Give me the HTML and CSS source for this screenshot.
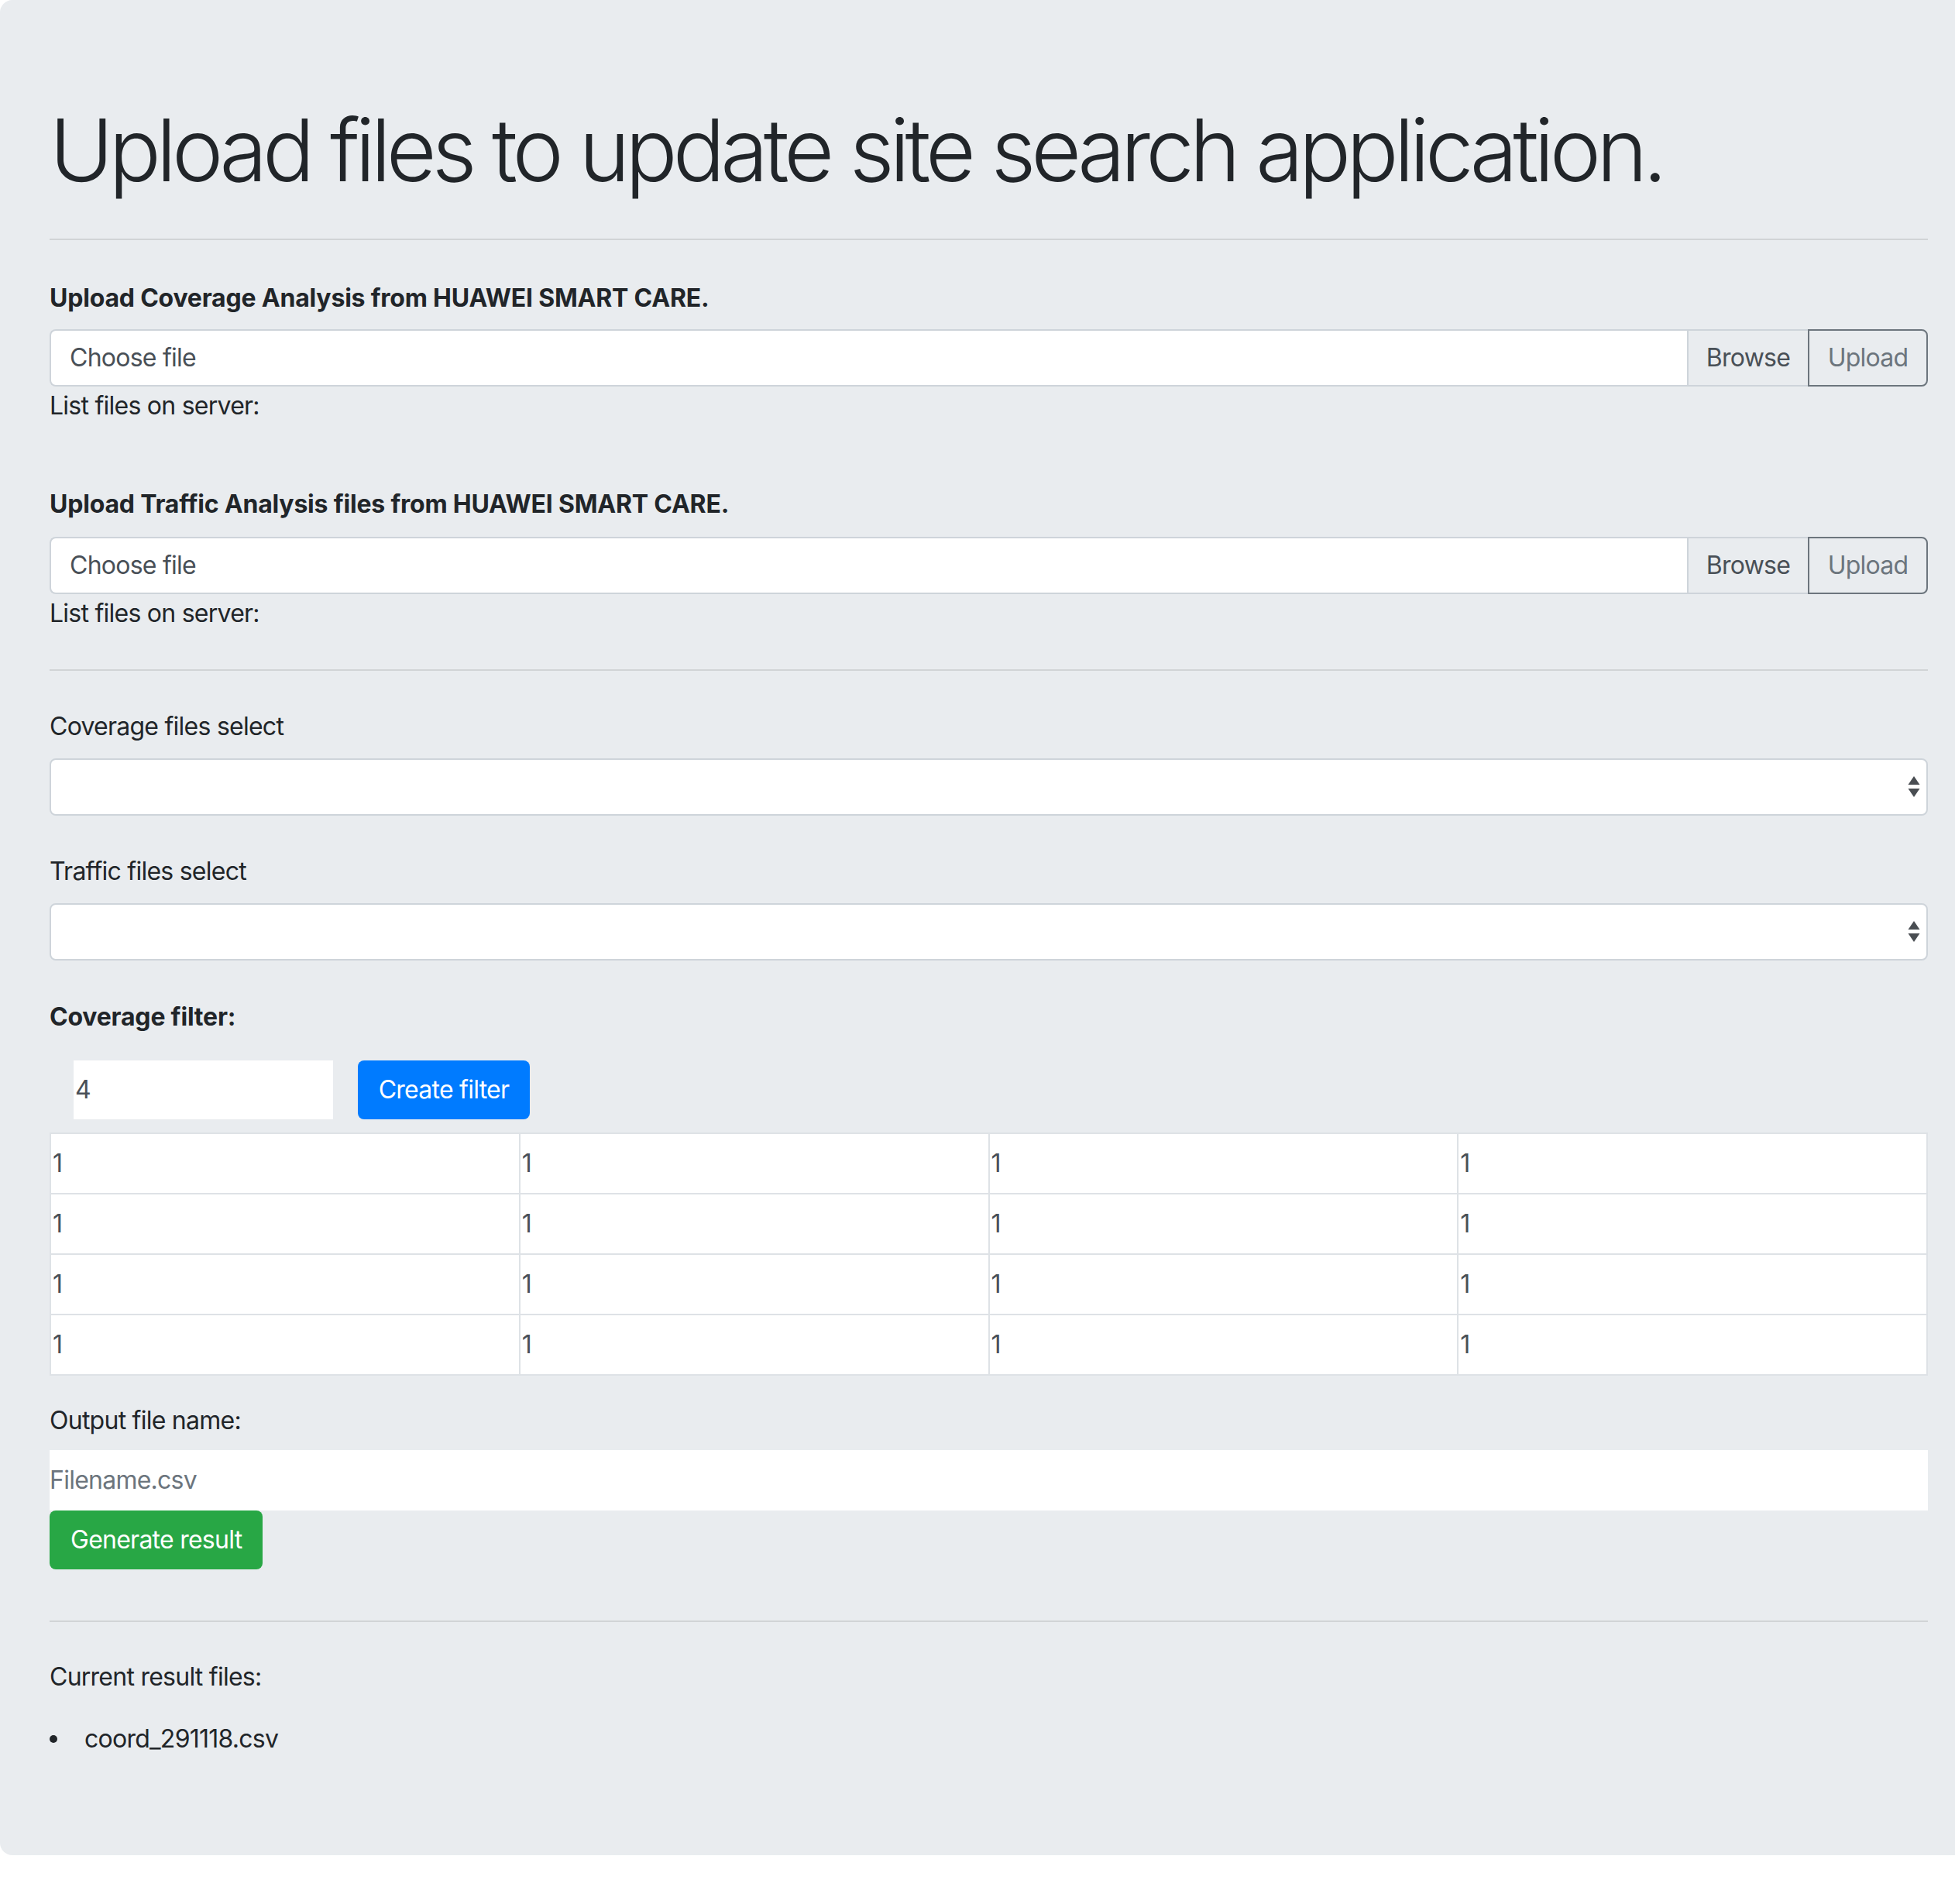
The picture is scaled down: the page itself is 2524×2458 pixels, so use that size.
FILE: index.html
```html
<!DOCTYPE html>
<html lang="en">
<head>
<meta charset="utf-8">
<title>Upload files to update site search application.</title>
<link rel="stylesheet" href="styles.css">
</head>
<body>
<div class="jumbotron">
  <h1 class="display">Upload files to update site search application.</h1>
  <hr class="rule rule-top">

  <section class="upload first">
    <div class="upload-title">Upload Coverage Analysis from HUAWEI SMART CARE.</div>
    <div class="input-group">
      <div class="file-field">
        <span class="file-label">Choose file</span>
        <span class="file-browse">Browse</span>
      </div>
      <button class="btn-outline">Upload</button>
    </div>
    <div class="list-files">List files on server:</div>
  </section>

  <section class="upload second">
    <div class="upload-title">Upload Traffic Analysis files from HUAWEI SMART CARE.</div>
    <div class="input-group">
      <div class="file-field">
        <span class="file-label">Choose file</span>
        <span class="file-browse">Browse</span>
      </div>
      <button class="btn-outline">Upload</button>
    </div>
    <div class="list-files">List files on server:</div>
  </section>

  <hr class="rule rule-mid">

  <div class="form-group first-select">
    <div class="field-label">Coverage files select</div>
    <div class="select-box">
      <svg class="select-arrows" width="16" height="30" viewBox="0 0 16 30"><path d="M8 1 L15.5 12 L0.5 12 Z" fill="#494d52"/><path d="M0.5 17 L15.5 17 L8 28 Z" fill="#494d52"/></svg>
    </div>
  </div>

  <div class="form-group second-select">
    <div class="field-label">Traffic files select</div>
    <div class="select-box">
      <svg class="select-arrows" width="16" height="30" viewBox="0 0 16 30"><path d="M8 1 L15.5 12 L0.5 12 Z" fill="#494d52"/><path d="M0.5 17 L15.5 17 L8 28 Z" fill="#494d52"/></svg>
    </div>
  </div>

  <div class="upload-title filter-title">Coverage filter:</div>
  <div class="filter-row">
    <div class="filter-input">4</div>
    <button class="btn-primary">Create filter</button>
  </div>

  <table class="grid">
    <tr><td>1</td><td>1</td><td>1</td><td>1</td></tr>
    <tr><td>1</td><td>1</td><td>1</td><td>1</td></tr>
    <tr><td>1</td><td>1</td><td>1</td><td>1</td></tr>
    <tr><td>1</td><td>1</td><td>1</td><td>1</td></tr>
  </table>

  <div class="output-label">Output file name:</div>
  <div class="filename-input">Filename.csv</div>
  <button class="btn-success">Generate result</button>

  <hr class="rule rule-bottom">

  <div class="current">Current result files:</div>
  <ul class="result-list">
    <li>coord_291118.csv</li>
  </ul>
</div>
</body>
</html>
```

FILE: styles.css
```css
html, body {
  margin: 0;
  padding: 0;
  background: #ffffff;
}

body {
  font-family: Inter, "Noto Sans", "Liberation Sans", sans-serif;
  color: #212529;
  font-size: 32px;
  line-height: 48px;
  letter-spacing: -0.75px;
}

.jumbotron {
  background: #e9ecef;
  padding: 126px 35px 126px 64px;
  border-radius: 16px 0 0 16px;
}

.display {
  margin: 0;
  font-size: 112px;
  font-weight: 300;
  line-height: 134px;
  letter-spacing: -6px;
}

.rule {
  border: 0;
  border-top: 2px solid rgba(0, 0, 0, 0.1);
  margin: 0;
  height: 0;
}

.rule-top { margin-top: 48px; }
.rule-mid { margin-top: 48px; }
.rule-bottom { margin-top: 66px; }

.upload-title {
  font-weight: 700;
  letter-spacing: -0.2px;
}

.upload.first { margin-top: 51px; }
.upload.second { margin-top: 79px; }

.upload.first .upload-title { margin-bottom: 16px; }
.upload.second .upload-title { margin-bottom: 18px; }

.input-group {
  display: flex;
  height: 74px;
}

.file-field {
  flex: 1;
  display: flex;
  background: #fff;
  border: 2px solid #ced4da;
  border-right: 0;
  border-radius: 8px 0 0 8px;
  color: #495057;
  overflow: hidden;
}

.file-label {
  flex: 1;
  padding: 0 24px;
  display: flex;
  align-items: center;
}

.file-browse {
  width: 156px;
  box-sizing: border-box;
  border-left: 2px solid #ced4da;
  background: #e9ecef;
  display: flex;
  align-items: center;
  justify-content: center;
}

.btn-outline {
  width: 155px;
  font: inherit;
  letter-spacing: inherit;
  color: #6c757d;
  background: transparent;
  border: 2px solid #6c757d;
  border-radius: 0 8px 8px 0;
  padding: 0;
}

.list-files { margin-top: 1px; }

.form-group .field-label {
  margin-bottom: 17px;
}

.first-select { margin-top: 48px; }
.second-select { margin-top: 48px; }

.select-box {
  height: 74px;
  box-sizing: border-box;
  background: #fff;
  border: 2px solid #ced4da;
  border-radius: 8px;
  display: flex;
  align-items: center;
  justify-content: flex-end;
  padding-right: 8px;
}

.filter-title { margin-top: 49px; }

.filter-row {
  display: flex;
  align-items: stretch;
  gap: 32px;
  margin-top: 32px;
  padding-left: 31px;
  height: 76px;
}

.filter-input {
  width: 335px;
  background: #fff;
  display: flex;
  align-items: center;
  padding-left: 2px;
  box-sizing: border-box;
  color: #495057;
}

.btn-primary {
  width: 222px;
  font: inherit;
  letter-spacing: inherit;
  color: #fff;
  background: #007bff;
  border: 0;
  border-radius: 8px;
  padding: 0;
}

.grid {
  width: 100%;
  margin-top: 17px;
  border-collapse: collapse;
  background: #fff;
  table-layout: fixed;
}

.grid td {
  border: 2px solid #dee2e6;
  height: 76px;
  padding: 0 0 0 2px;
  color: #495057;
  vertical-align: middle;
}

.output-label { margin-top: 34px; }

.filename-input {
  margin-top: 14px;
  height: 78px;
  background: #fff;
  color: #6c757d;
  display: flex;
  align-items: center;
}

.btn-success {
  display: block;
  font: inherit;
  letter-spacing: inherit;
  height: 76px;
  padding: 0 27px;
  color: #fff;
  background: #28a745;
  border: 0;
  border-radius: 8px;
}

.current { margin-top: 47px; }

.result-list {
  list-style: none;
  margin: 32px 0 0 0;
  padding: 0;
}

.result-list li {
  display: flex;
  align-items: center;
}

.result-list li::before {
  content: "";
  width: 10px;
  height: 10px;
  border-radius: 50%;
  background: #212529;
  margin-right: 35px;
}
```
